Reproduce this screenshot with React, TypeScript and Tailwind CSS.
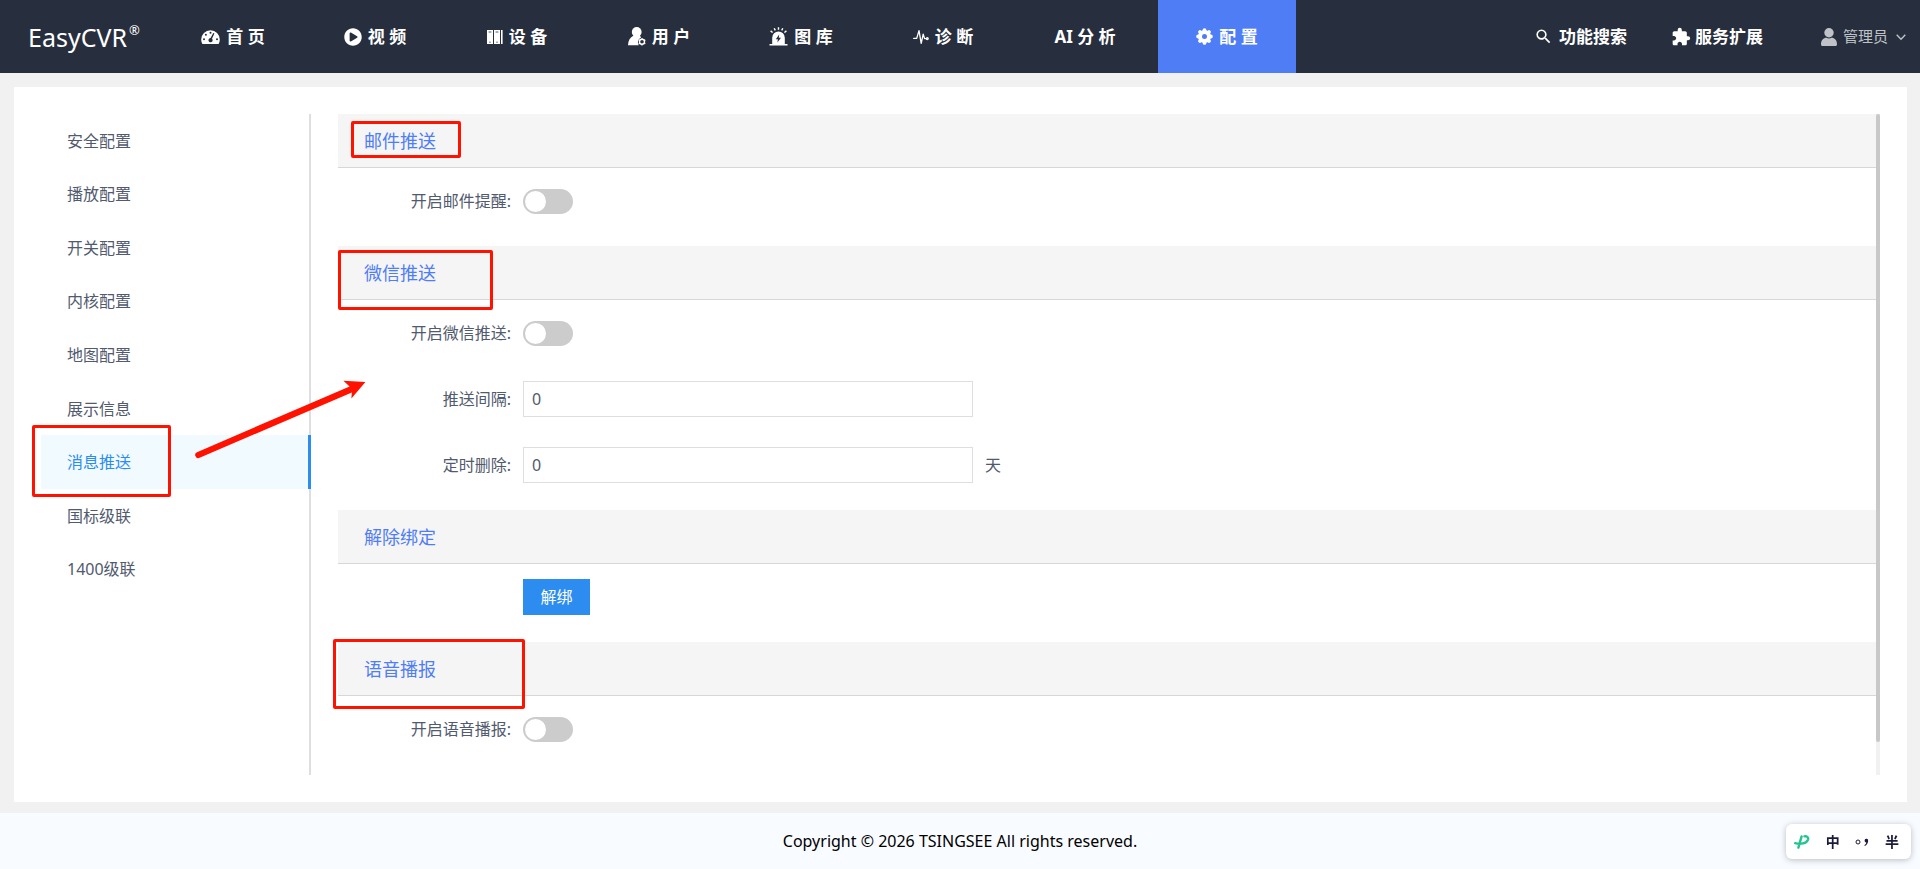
import { useState } from 'react';
import type { ReactNode } from 'react';
import { FaPlayCircle } from 'react-icons/fa';
import { MdSearch, MdExtension } from 'react-icons/md';

const GaugeIcon = () => (
  <svg className="h-[18px] w-[19px]" viewBox="0 0 19 18" fill="currentColor">
    <path d="M9.5 2.2A9.3 9.3 0 0 0 .2 11.5c0 1.4.3 2.7.9 3.9.3.4.6.6 1.1.6h14.6c.5 0 .8-.2 1.1-.6.6-1.2.9-2.5.9-3.9a9.3 9.3 0 0 0-9.3-9.3z" />
    <g fill="#272f3e">
      <circle cx="9.5" cy="4.8" r="1" />
      <circle cx="4.9" cy="6.8" r="1" />
      <circle cx="3" cy="11.2" r="1" />
      <circle cx="16" cy="11.2" r="1" />
      <path d="M13.4 5.4 11 10.7a2.1 2.1 0 1 1-1.4-.6l2.6-5.2z" />
    </g>
  </svg>
);

const CabinetIcon = () => (
  <svg className="h-4 w-4" viewBox="0 0 16 16" fill="currentColor">
    <path d="M0 1h6v14H0z M7 1h6v14H7z M14 1h1.6v14H14z" />
    <path d="M1.6 3h2.8M8.6 3h2.8" stroke="#272f3e" strokeWidth=".8" />
    <path d="M2.4 13.2h1.2M9.4 13.2h1.2" stroke="#272f3e" strokeWidth="1" />
  </svg>
);

const UserGearIcon = () => (
  <svg className="h-[19px] w-[18px]" viewBox="0 0 18 19" fill="currentColor">
    <circle cx="8.7" cy="5" r="4.9" />
    <path d="M5.6 8.6C2 10.6.2 13.6 0 18.2h10.8a5 5 0 0 1-.9-2.9c.1-2.8 1.6-4.3 3.2-4.9L11.6 8z" />
    <circle cx="14" cy="14.8" r="2.5" fill="none" stroke="currentColor" strokeWidth="1.4" />
    <path
      d="M14 11.2v1.2M14 17.2v1.2M10.7 12.9l1.1.7M16.2 16l1.1.7M10.7 16.7l1.1-.7M16.2 13.6l1.1-.7"
      stroke="currentColor"
      strokeWidth="1.3"
    />
  </svg>
);

const SirenIcon = () => (
  <svg className="h-[19px] w-[19px]" viewBox="0 0 19 19" fill="currentColor">
    <path d="M.5 17h18v1.5H.5z M3.2 17v-6.2a6.3 6.3 0 0 1 12.6 0V17z" />
    <path d="M10.2 7.6 6.8 12.2h2.1l-.5 3.4 3.6-4.8H9.8z" fill="#272f3e" />
    <path
      d="M9.5.2v2.6M5.2 1.2l1.1 2.2M13.8 1.2l-1.1 2.2M1.6 3.9l2 1.6M17.4 3.9l-2 1.6"
      stroke="currentColor"
      strokeWidth="1.4"
    />
  </svg>
);

const PulseIcon = () => (
  <svg
    className="h-4 w-4"
    viewBox="0 0 16 16"
    fill="none"
    stroke="currentColor"
    strokeWidth="1.3"
    strokeLinecap="round"
    strokeLinejoin="round"
  >
    <path d="M.7 9.4h3L6 1.6l2.2 12.8 2-9.2 1.4 4.4h1.8" />
    <circle cx="14.3" cy="9.6" r=".9" />
  </svg>
);

// eight lobes round a small hub
const GearIcon = () => (
  <svg className="h-[17px] w-[17px]" viewBox="0 0 17 17" fill="currentColor">
    <circle cx="8.5" cy="8.5" r="4.5" fill="none" stroke="currentColor" strokeWidth="4" />
    <g stroke="currentColor" strokeWidth="3.8" strokeLinecap="round">
      <path d="M8.5 2.1v.6M8.5 14.3v.6M2.1 8.5h.6M14.3 8.5h.6" />
      <path d="m4 4 .4.4M12.6 12.6l.4.4M13 4l-.4.4M4.4 12.6 4 13" />
    </g>
  </svg>
);

const PersonIcon = () => (
  <svg className="h-[18px] w-4" viewBox="0 0 16 18" fill="currentColor">
    <circle cx="8" cy="4.7" r="4.7" />
    <path d="M0 16.2c0-4 2.6-6.4 5.4-6.4 1.6.8 3.6.8 5.2 0 2.8 0 5.4 2.4 5.4 6.4 0 1.2-.6 1.8-1.6 1.8H1.6C.6 18 0 17.4 0 16.2z" />
  </svg>
);

const navItems: { label: string; icon?: ReactNode; active?: boolean }[] = [
  { label: '首 页', icon: <GaugeIcon /> },
  { label: '视 频', icon: <FaPlayCircle className="h-[18px] w-[18px]" /> },
  { label: '设 备', icon: <CabinetIcon /> },
  { label: '用 户', icon: <UserGearIcon /> },
  { label: '图 库', icon: <SirenIcon /> },
  { label: '诊 断', icon: <PulseIcon /> },
  { label: 'AI 分 析' },
  { label: '配 置', icon: <GearIcon />, active: true },
];

const menuItems = [
  '安全配置',
  '播放配置',
  '开关配置',
  '内核配置',
  '地图配置',
  '展示信息',
  '消息推送',
  '国标级联',
  '1400级联',
];

const Header = () => (
  <header className="flex h-[73px] shrink-0 items-center bg-[#272f3e] text-white">
    <a href="#" className="flex w-[160px] shrink-0 items-center pl-7 text-[25px] leading-9">
      EasyCVR<sup className="ml-0.5 text-[13px] leading-none">®</sup>
    </a>
    <nav className="flex h-full items-center">
      {navItems.map((item) => (
        <a
          key={item.label}
          href="#"
          className={`ml-1 flex h-full w-[138px] items-center justify-center gap-1.5 text-[17px] font-bold ${
            item.active ? 'bg-[#4f7df6]' : ''
          }`}
        >
          {item.icon}
          <span>{item.label}</span>
        </a>
      ))}
    </nav>
    <div className="ml-auto flex items-center pr-3.5">
      <a href="#" className="flex items-center gap-1.5 text-[17px] font-bold">
        <MdSearch className="h-[19px] w-[19px]" />
        功能搜索
      </a>
      <a href="#" className="ml-11 flex items-center gap-1 text-[17px] font-bold">
        <MdExtension className="h-5 w-5" />
        服务扩展
      </a>
      <button type="button" className="ml-[58px] flex items-center text-[15px] text-[#bfc2c7]">
        <PersonIcon />
        <span className="ml-1.5">管理员</span>
        <svg className="ml-2 h-2.5 w-2.5" viewBox="0 0 10 10" fill="none" stroke="currentColor" strokeWidth="1.4">
          <path d="M.7 2.8 5 7.2l4.3-4.4" />
        </svg>
      </button>
    </div>
  </header>
);

const Mark = ({ className }: { className: string }) => (
  <span className={`pointer-events-none absolute z-10 rounded-xs border-3 border-[#ff1200] ${className}`} />
);

const Sidebar = () => (
  <aside className="w-[270px] shrink-0 border-r-2 border-[#dcdee2]">
    <ul className="flex h-[482px] flex-col text-base text-[#515a6e]">
      {menuItems.map((item) => {
        const active = item === '消息推送';
        return (
          <li key={item} className="relative flex flex-1">
            <a
              href="#"
              className={`flex flex-1 items-center pl-[26px] ${
                active ? '-mr-0.5 border-r-[3px] border-[#2d8cf0] bg-[#f0faff] text-[#2d8cf0]' : ''
              }`}
            >
              {item}
            </a>
            {active && <Mark className="-left-[9px] -top-2.5 h-[72px] w-[139px]" />}
          </li>
        );
      })}
    </ul>
  </aside>
);

const Section = ({ title, mark, children }: { title: string; mark?: string; children: ReactNode }) => (
  <section>
    <div className="relative flex h-[54px] items-center border-b border-[#d7d7d9] bg-[#f5f5f5] pl-[26px]">
      <h2 className="text-lg text-[#4f7df6]">{title}</h2>
      {mark && <Mark className={mark} />}
    </div>
    <div className="flex flex-col gap-[30px] pt-[15px] pb-[27px]">{children}</div>
  </section>
);

const Row = ({ id, label, children }: { id?: string; label?: string; children: ReactNode }) => (
  <div className="flex h-9 items-center gap-3">
    {label ? (
      <label htmlFor={id} className="w-[173px] shrink-0 text-right text-base text-[#515a6e]">
        {label}
      </label>
    ) : (
      <span className="w-[173px] shrink-0" />
    )}
    {children}
  </div>
);

const Switch = ({ id }: { id: string }) => {
  const [on, setOn] = useState(false);

  return (
    <input
      id={id}
      type="checkbox"
      role="switch"
      checked={on}
      onChange={(e) => setOn(e.target.checked)}
      className="flex h-[25px] w-[50px] cursor-pointer appearance-none items-center rounded-full bg-[#ccc] px-0.5 before:h-[21px] before:w-[21px] before:rounded-full before:bg-white checked:justify-end checked:bg-[#2d8cf0]"
    />
  );
};

const NumberInput = ({ id }: { id: string }) => (
  <input
    id={id}
    type="text"
    defaultValue="0"
    className="h-9 w-[450px] border border-[#dcdee2] bg-white px-2 text-base text-[#515a6e] outline-none"
  />
);

const App = () => {
  return (
    <div className="flex min-h-screen flex-col bg-[#f1f1f1] font-['Noto_Sans','Noto_Sans_CJK_SC',sans-serif]">
      <Header />

      <main className="flex flex-1 flex-col pt-3.5 pr-[13px] pb-[11px] pl-3.5">
        <div className="relative flex flex-1 gap-[27px] bg-white p-[27px]">
          <Sidebar />

          <div className="flex flex-1">
            <div className="flex-1">
              <Section title="邮件推送" mark="left-[13px] top-[7px] h-[37px] w-[110px]">
                <Row id="mail" label="开启邮件提醒:">
                  <Switch id="mail" />
                </Row>
              </Section>

              <Section title="微信推送" mark="left-0 top-1 h-[60px] w-[155px]">
                <Row id="wechat" label="开启微信推送:">
                  <Switch id="wechat" />
                </Row>
                <Row id="interval" label="推送间隔:">
                  <NumberInput id="interval" />
                </Row>
                <Row id="cleanup" label="定时删除:">
                  <NumberInput id="cleanup" />
                  <span className="text-base text-[#515a6e]">天</span>
                </Row>
              </Section>

              <Section title="解除绑定">
                <Row>
                  <button type="button" className="h-9 w-[67px] bg-[#2d8cf0] text-base text-white">
                    解绑
                  </button>
                </Row>
              </Section>

              <Section title="语音播报" mark="-left-[5px] -top-[3px] h-[70px] w-[192px]">
                <Row id="voice" label="开启语音播报:">
                  <Switch id="voice" />
                </Row>
              </Section>
            </div>

            {/* scrollbar */}
            <div className="w-1 bg-[#f1f1f1]">
              <div className="h-[95%] rounded-xs bg-[#c8c8c8]" />
            </div>
          </div>

          {/* arrow from the menu entry to the form */}
          <svg
            className="pointer-events-none absolute left-[178px] top-[290px] h-[84px] w-[176px]"
            viewBox="0 0 176 84"
            fill="#ff1200"
          >
            <path d="M5 75.2a3 3 0 0 0 2.6 5.6L159.8 15.4 159.4 21.6 173.4 5 151.4 3.8 157.6 9.4z" />
          </svg>
        </div>
      </main>

      <footer className="flex h-14 shrink-0 items-center justify-center bg-[#f8fbff] text-base text-black">
        Copyright © 2026 TSINGSEE All rights reserved.
      </footer>

      {/* input method bar */}
      <div className="fixed right-[9px] bottom-2.5 flex h-[35px] w-[125px] items-center justify-between rounded-md bg-white pr-3 pl-2 text-sm font-bold text-[#1a1a3a] shadow-[0_1px_6px_rgba(0,0,0,0.25)]">
        <svg className="h-3.5 w-4" viewBox="0 0 16 14" fill="none" stroke="#22c58b" strokeWidth="2.4" strokeLinecap="round">
          <path d="M7.6 1.4 4.4 12.6M1.2 8.2c5 1.4 11.4.4 12.8-3.6.8-2.6-1.4-3.6-3.6-3.2" />
        </svg>
        <span>中</span>
        <svg className="h-3.5 w-3.5" viewBox="0 0 14 14">
          <circle cx="3" cy="7" r="2" fill="none" stroke="currentColor" />
          <path
            d="M9.6 5.6a1.8 1.8 0 1 1 3.5.6c-.2 2.2-1.4 3.8-3.3 4.8l-.4-.7c1.2-.8 1.8-1.6 1.9-2.7-.9 0-1.7-.8-1.7-2z"
            fill="currentColor"
          />
        </svg>
        <span>半</span>
      </div>
    </div>
  );
};

export default App;
